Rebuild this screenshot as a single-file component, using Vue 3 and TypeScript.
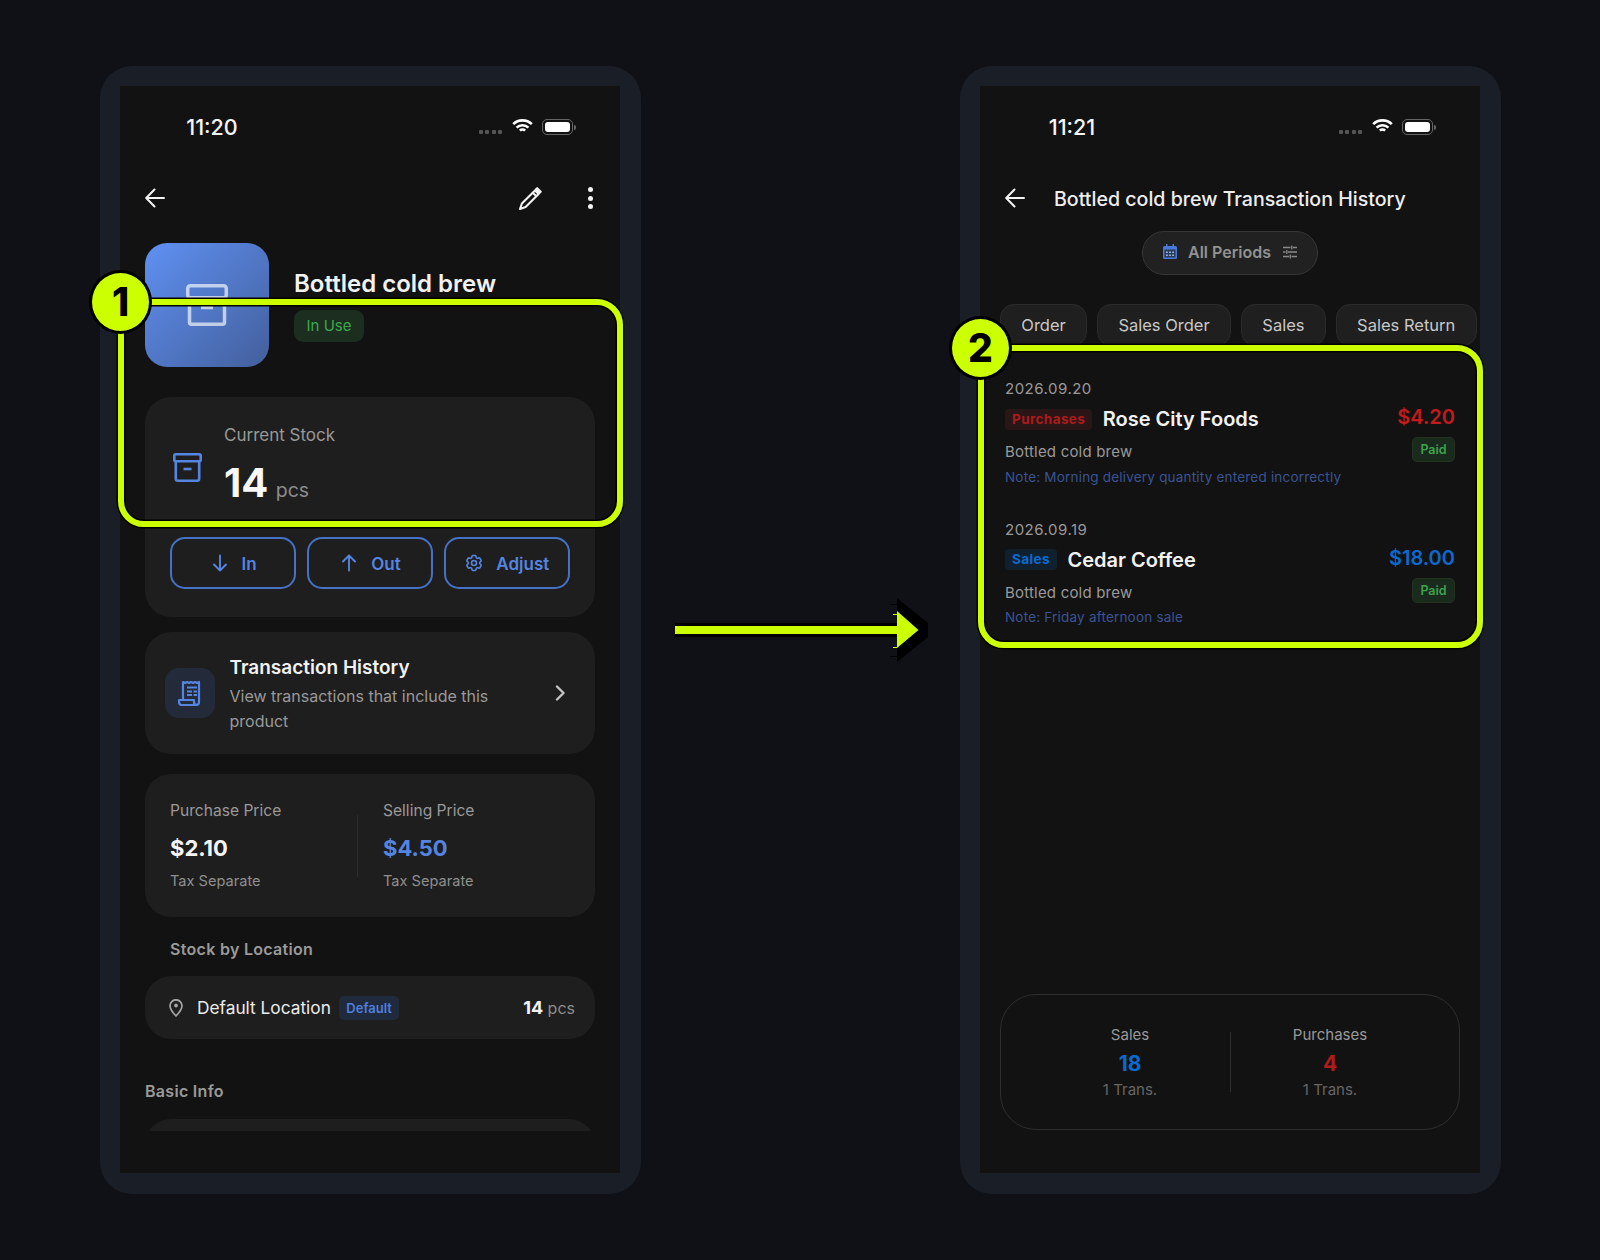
<script setup lang="ts">
interface Transaction {
  date: string
  kind: string
  tone: 'red' | 'blue'
  vendor: string
  amount: string
  item: string
  note: string
}

const tabs = ['Order', 'Sales Order', 'Sales', 'Sales Return']

const transactions: Transaction[] = [
  {
    date: '2026.09.20',
    kind: 'Purchases',
    tone: 'red',
    vendor: 'Rose City Foods',
    amount: '$4.20',
    item: 'Bottled cold brew',
    note: 'Note: Morning delivery quantity entered incorrectly'
  },
  {
    date: '2026.09.19',
    kind: 'Sales',
    tone: 'blue',
    vendor: 'Cedar Coffee',
    amount: '$18.00',
    item: 'Bottled cold brew',
    note: 'Note: Friday afternoon sale'
  }
]

const gearPath =
  'M9.594 3.94c.09-.542.56-.94 1.11-.94h2.593c.55 0 1.02.398 1.11.94l.213 1.281c.063.374.313.686.645.87.074.04.147.083.22.127.325.196.72.257 1.075.124l1.217-.456a1.125 1.125 0 0 1 1.37.49l1.296 2.247a1.125 1.125 0 0 1-.26 1.431l-1.003.827c-.293.241-.438.613-.43.992a7.723 7.723 0 0 1 0 .255c-.008.378.137.75.43.991l1.004.827c.424.35.534.955.26 1.43l-1.298 2.247a1.125 1.125 0 0 1-1.369.491l-1.217-.456c-.355-.133-.75-.072-1.076.124a6.47 6.47 0 0 1-.22.128c-.331.183-.581.495-.644.869l-.213 1.281c-.09.543-.56.94-1.11.94h-2.594c-.55 0-1.019-.398-1.11-.94l-.213-1.281c-.062-.374-.312-.686-.644-.87a6.52 6.52 0 0 1-.22-.127c-.325-.196-.72-.257-1.076-.124l-1.217.456a1.125 1.125 0 0 1-1.369-.49l-1.297-2.247a1.125 1.125 0 0 1 .26-1.431l1.004-.827c.292-.24.437-.613.43-.991a6.932 6.932 0 0 1 0-.255c.007-.38-.138-.751-.43-.992l-1.004-.827a1.125 1.125 0 0 1-.26-1.43l1.297-2.247a1.125 1.125 0 0 1 1.37-.491l1.216.456c.356.133.751.072 1.076-.124.072-.044.146-.086.22-.128.332-.183.582-.495.644-.869l.214-1.28Z'
</script>

<template>
  <div class="page">
    <!-- product detail -->
    <section class="phone">
      <div class="screen">
        <div class="status">
          <span class="time">11:20</span>
          <div class="status-icons">
            <span class="signal"><i></i><i></i><i></i><i></i></span>
            <svg class="wifi" viewBox="0 0 21 15" fill="none" stroke="#fff" stroke-width="2.600">
              <path d="M1.200 5.200a13.200 13.200 0 0 1 18.600 0" />
              <path d="M4.600 8.600a8.400 8.400 0 0 1 11.800 0" />
              <path d="M7.900 11.700a3.700 3.700 0 0 1 5.200 0" />
            </svg>
            <span class="battery"><i></i></span>
          </div>
        </div>

        <div class="nav">
          <svg class="back" viewBox="0 0 20 20" fill="none" stroke="#f2f2f2" stroke-width="2" stroke-linecap="round" stroke-linejoin="round">
            <path d="M19 10H1.500M9.500 1.500 1.200 10l8.300 8.500" />
          </svg>
          <svg class="pencil" viewBox="0 0 24 23" fill="none" stroke="#f2f2f2" stroke-width="2.100" stroke-linejoin="round">
            <path d="M17 3.500 20.600 7 7.600 20l-5.600 2 1.900-5.500Z" />
            <path d="M14.800 5.700l3.600 3.500" />
            <path d="M19.200 1.200l3.500 3.500-1.400 1.400-3.500-3.500Z" fill="#f2f2f2" />
          </svg>
          <span class="dots"><i></i><i></i><i></i></span>
        </div>

        <div class="scroll">
          <div class="product">
            <div class="thumb">
              <svg viewBox="0 0 42 42" fill="none" stroke="#fff" stroke-opacity=".65" stroke-width="3.500" stroke-linejoin="round">
                <rect x="1.750" y="1.750" width="38.500" height="12" rx="2.500" />
                <path d="M3.500 13.750v24.500a2 2 0 0 0 2 2h31a2 2 0 0 0 2-2v-24.500" />
                <path d="M15 23.500h12" />
              </svg>
            </div>
            <div class="product-info">
              <h1>Bottled cold brew</h1>
              <span class="use-badge">In Use</span>
            </div>
          </div>

          <div class="card stock">
            <div class="stock-row">
              <svg class="stock-icon" viewBox="0 0 29 29" fill="none" stroke="#5585e0" stroke-width="2.600" stroke-linejoin="round">
                <rect x="1.300" y="1.300" width="26.400" height="7" rx="1.500" />
                <path d="M2.800 8.300v17.400a2 2 0 0 0 2 2h19.400a2 2 0 0 0 2-2V8.300" />
                <path d="M10.500 16h8" />
              </svg>
              <div>
                <div class="stock-label">Current Stock</div>
                <div class="stock-value">14 <small>pcs</small></div>
              </div>
            </div>
            <div class="actions">
              <button>
                <svg viewBox="0 0 20 20" fill="none" stroke="currentColor" stroke-width="1.900" stroke-linecap="round" stroke-linejoin="round">
                  <path d="M10 2.500v15M4 11.500l6 6 6-6" />
                </svg>
                In
              </button>
              <button>
                <svg viewBox="0 0 20 20" fill="none" stroke="currentColor" stroke-width="1.900" stroke-linecap="round" stroke-linejoin="round">
                  <path d="M10 17.500v-15M4 8.500l6-6 6 6" />
                </svg>
                Out
              </button>
              <button>
                <svg viewBox="0 0 24 24" fill="none" stroke="currentColor" stroke-width="1.900" stroke-linejoin="round">
                  <path :d="gearPath" />
                  <circle cx="12" cy="12" r="3" />
                </svg>
                Adjust
              </button>
            </div>
          </div>

          <div class="card history">
            <div class="history-icon">
              <svg viewBox="0 0 24 26" fill="none" stroke="#5585e0" stroke-width="2.200" stroke-linejoin="round">
                <path d="M5 19V2l2 1 2-1 2 1 2-1 2 1 2-1 2 1 2-1v20a3 3 0 0 1-3 3H4a3 3 0 0 1-3-3v-2h15v2a3 3 0 0 0 3 3" />
                <path d="M9 7.500h10M9 11.500h5M15.500 11.500H19M9 15h5M15.500 15H19" stroke-width="1.800" />
              </svg>
            </div>
            <div class="history-text">
              <div class="history-title">Transaction History</div>
              <div class="history-desc">View transactions that include this product</div>
            </div>
            <svg class="chevron" viewBox="0 0 10 20" fill="none" stroke="#c4c4c4" stroke-width="2.400" stroke-linecap="round" stroke-linejoin="round">
              <path d="M2 3.500l6.500 6.500L2 16.500" />
            </svg>
          </div>

          <div class="card prices">
            <div class="price-col first">
              <div class="price-label">Purchase Price</div>
              <div class="price-value">$2.10</div>
              <div class="price-tax">Tax Separate</div>
            </div>
            <div class="price-divider"></div>
            <div class="price-col">
              <div class="price-label">Selling Price</div>
              <div class="price-value accent">$4.50</div>
              <div class="price-tax">Tax Separate</div>
            </div>
          </div>

          <h2 class="section-title indented">Stock by Location</h2>
          <div class="card location">
            <svg class="pin" viewBox="0 0 14 18" fill="none" stroke="#a5a5a5" stroke-width="1.700" stroke-linejoin="round">
              <path d="M7 17S1 10.800 1 6.800a6 6 0 0 1 12 0C13 10.800 7 17 7 17Z" />
              <circle cx="7" cy="6.500" r="1.900" fill="#a5a5a5" stroke="none" />
            </svg>
            <span class="location-name">Default Location</span>
            <span class="default-badge">Default</span>
            <span class="location-qty"><b>14</b> pcs</span>
          </div>

          <h2 class="section-title basic">Basic Info</h2>
          <div class="card basic-card"></div>
        </div>
      </div>

      <div class="mark-box one"></div>
      <div class="mark-num one">1</div>
    </section>

    <div class="arrow-gap">
      <svg width="253" height="64" viewBox="0 0 253 64">
        <path d="M0 25h222V0l31 25v14l-31 25V39H0Z" fill="#000" />
        <path d="M215 6h7v1h-7ZM215 58h7v1h-7Z" fill="#000" />
        <path d="M218 16h4v1h-4ZM218 49h4v1h-4Z" fill="#ccff00" />
        <path d="M0 28h222V13l21.500 19L222 50V36H0Z" fill="#ccff00" />
      </svg>
    </div>

    <!-- transaction history -->
    <section class="phone">
      <div class="screen">
        <div class="status">
          <span class="time">11:21</span>
          <div class="status-icons">
            <span class="signal"><i></i><i></i><i></i><i></i></span>
            <svg class="wifi" viewBox="0 0 21 15" fill="none" stroke="#fff" stroke-width="2.600">
              <path d="M1.200 5.200a13.200 13.200 0 0 1 18.600 0" />
              <path d="M4.600 8.600a8.400 8.400 0 0 1 11.800 0" />
              <path d="M7.900 11.700a3.700 3.700 0 0 1 5.200 0" />
            </svg>
            <span class="battery"><i></i></span>
          </div>
        </div>

        <div class="nav">
          <svg class="back" viewBox="0 0 20 20" fill="none" stroke="#f2f2f2" stroke-width="2" stroke-linecap="round" stroke-linejoin="round">
            <path d="M19 10H1.500M9.500 1.500 1.200 10l8.300 8.500" />
          </svg>
          <span class="nav-title">Bottled cold brew Transaction History</span>
        </div>

        <div class="period-wrap">
          <div class="period">
            <svg class="cal" viewBox="0 0 14 15">
              <path d="M3 0h1.500v2h5V0H11v2h1.500A1.500 1.500 0 0 1 14 3.500v10a1.500 1.500 0 0 1-1.500 1.500h-11A1.500 1.500 0 0 1 0 13.500v-10A1.500 1.500 0 0 1 1.500 2H3Z" fill="#4a7ad8" />
              <path d="M1.500 5.500h11v8h-11Z" fill="#2a3a5a" />
              <path d="M3 7.500h1.800v1.500H3ZM6.100 7.500h1.800v1.500H6.100ZM9.200 7.500H11v1.500H9.200ZM3 10.500h1.800V12H3ZM6.100 10.500h1.800V12H6.100ZM9.200 10.500H11V12H9.200Z" fill="#9fb8e8" />
            </svg>
            <span>All Periods</span>
            <svg class="sliders" viewBox="0 0 14 14" fill="none" stroke="#8a8a8a" stroke-width="1.300">
              <path d="M0 2.500h7.500M10 2.500h4M8.800 0.500v4M0 7h2.500M5 7h9M3.800 5v4M0 11.500h6M8.500 11.500H14M7.300 9.500v4" />
            </svg>
          </div>
        </div>

        <div class="tabs">
          <button v-for="tab in tabs" :key="tab" class="tab">{{ tab }}</button>
        </div>

        <div class="tx-list">
          <div v-for="tx in transactions" :key="tx.date" class="tx">
            <div class="tx-main">
              <div class="tx-date">{{ tx.date }}</div>
              <div class="tx-head">
                <span class="kind" :class="tx.tone">{{ tx.kind }}</span>
                <span class="vendor">{{ tx.vendor }}</span>
              </div>
              <div class="tx-item">{{ tx.item }}</div>
              <div class="tx-note">{{ tx.note }}</div>
            </div>
            <div class="tx-side">
              <div class="amount" :class="tx.tone">{{ tx.amount }}</div>
              <span class="paid">Paid</span>
            </div>
          </div>
        </div>

        <div class="summary">
          <div class="sum-col">
            <div class="sum-label">Sales</div>
            <div class="sum-value blue">18</div>
            <div class="sum-count">1 Trans.</div>
          </div>
          <div class="sum-divider"></div>
          <div class="sum-col">
            <div class="sum-label">Purchases</div>
            <div class="sum-value red">4</div>
            <div class="sum-count">1 Trans.</div>
          </div>
        </div>
      </div>

      <div class="mark-box two"></div>
      <div class="mark-num two">2</div>
    </section>
  </div>
</template>

<style>
html,
body {
  background: #0f1116;
}
</style>

<style scoped>
.page {
  display: flex;
  align-items: flex-start;
  width: 1600px;
  height: 1260px;
  box-sizing: border-box;
  padding: 66px 0 0 100px;
  background: #0f1116;
  font-family: Inter, "Liberation Sans", sans-serif;
  color: #f2f2f2;
  overflow: hidden;
}

.phone {
  position: relative;
  flex: none;
  width: 541px;
  height: 1128px;
  box-sizing: border-box;
  padding: 20px 21px 21px 20px;
  background: #1a1e27;
  border-radius: 32px;
}

.screen {
  display: flex;
  flex-direction: column;
  height: 100%;
  background: #121212;
  overflow: hidden;
}

.arrow-gap {
  flex: none;
  display: flex;
  width: 319px;
  height: 1128px;
  align-items: center;
  padding-left: 34px;
  box-sizing: border-box;
}

/* status bar */
.status {
  flex: none;
  display: flex;
  align-items: center;
  justify-content: space-between;
  height: 81px;
  margin-bottom: 1px;
  padding: 0 47px 0 66px;
}

.time {
  width: 52px;
  font-size: 21.500px;
  font-weight: 500;
  color: #f5f5f5;
  text-align: center;
  white-space: nowrap;
}

.status-icons {
  display: flex;
  align-items: center;
}

.signal {
  display: flex;
  gap: 2.500px;
  margin-top: 10px;
  margin-right: 10px;
}

.signal i {
  width: 4px;
  height: 4px;
  border-radius: 1px;
  background: #555;
}

.wifi {
  width: 21px;
  height: 15px;
  margin-right: 9px;
}

.battery {
  position: relative;
  box-sizing: border-box;
  display: block;
  width: 31px;
  height: 16px;
  padding: 2px;
  border: 1px solid #666;
  border-radius: 5px;
}

.battery::after {
  content: "";
  position: absolute;
  right: -3.500px;
  top: 5px;
  width: 2px;
  height: 5px;
  border-radius: 0 2px 2px 0;
  background: #666;
}

.battery i {
  display: block;
  height: 100%;
  border-radius: 3px;
  background: #fff;
}

/* nav */
.nav {
  flex: none;
  display: flex;
  align-items: center;
  height: 60px;
  padding: 0 25px;
}

.back {
  width: 20px;
  height: 20px;
}

.pencil {
  width: 24px;
  height: 23px;
  margin-left: auto;
  margin-right: 46px;
}

.dots {
  display: flex;
  flex-direction: column;
  gap: 3.500px;
  margin-right: 2px;
}

.dots i {
  width: 5px;
  height: 5px;
  border-radius: 50%;
  background: #f2f2f2;
}

.nav-title {
  margin-left: 29px;
  font-size: 19.600px;
  font-weight: 500;
  color: #eee;
  margin-top: 1px;
}

/* left phone content */
.scroll {
  height: 903px;
  padding: 15px 25px 0;
  box-sizing: border-box;
  overflow: hidden;
}

.product {
  display: flex;
  gap: 25px;
}

.thumb {
  display: flex;
  align-items: center;
  justify-content: center;
  width: 124px;
  height: 124px;
  border-radius: 22px;
  background: linear-gradient(135deg, #5f90f2, #435f9c);
}

.thumb svg {
  width: 42px;
  height: 42px;
}

.product-info {
  padding-top: 26px;
}

.product-info h1 {
  margin: 0;
  font-size: 24px;
  line-height: 30px;
  font-weight: 600;
  color: #f2f2f2;
}

.use-badge {
  display: block;
  width: 70px;
  height: 32px;
  margin-top: 11px;
  border-radius: 9px;
  background: #1c2e20;
  color: #3fa84e;
  font-size: 15px;
  line-height: 32px;
  text-align: center;
}

.card {
  background: #1e1e1e;
  border-radius: 26px;
}

.stock {
  margin-top: 30px;
  padding: 26px 25px 28px;
}

.stock-row {
  display: flex;
  align-items: center;
  gap: 22px;
  padding-left: 3px;
}

.stock-icon {
  width: 29px;
  height: 29px;
  margin-top: 6px;
}

.stock-label {
  font-size: 17px;
  line-height: 24px;
  color: #999;
}

.stock-value {
  margin-top: 13px;
  font-size: 40px;
  line-height: 46px;
  font-weight: 700;
  color: #f8f8f8;
}

.stock-value small {
  margin-left: -2px;
  font-size: 19.500px;
  line-height: 1;
  font-weight: 400;
  color: #8c8c8c;
}

.actions {
  display: flex;
  gap: 10.500px;
  margin-top: 31px;
}

.actions button {
  flex: 1;
  display: flex;
  align-items: center;
  justify-content: center;
  gap: 12px;
  height: 52px;
  padding: 2px 0 0;
  background: none;
  border: 2px solid #4672c6;
  border-radius: 15px;
  color: #5585e0;
  font: 600 17px Inter, "Liberation Sans", sans-serif;
}

.actions svg {
  width: 20px;
  height: 20px;
  margin-top: -2px;
}

.history {
  display: flex;
  align-items: center;
  margin-top: 15px;
  padding: 23px 20px 20px;
}

.history-icon {
  flex: none;
  display: flex;
  align-items: center;
  justify-content: center;
  width: 50px;
  height: 50px;
  margin-top: -3px;
  margin-right: 14.500px;
  border-radius: 14px;
  background: #232b3b;
}

.history-icon svg {
  width: 24px;
  height: 26px;
}

.history-text {
  flex: 1;
}

.history-title {
  font-size: 19px;
  line-height: 26px;
  font-weight: 600;
  color: #f2f2f2;
}

.history-desc {
  width: 290px;
  margin-top: 3px;
  font-size: 16px;
  line-height: 25px;
  color: #999;
}

.chevron {
  flex: none;
  width: 10px;
  height: 20px;
  margin-top: -4px;
  margin-right: 10px;
}

.prices {
  display: flex;
  align-items: center;
  margin-top: 20px;
  padding: 26px 25px;
}

.price-col.first {
  width: 187px;
}

.price-label {
  font-size: 15.600px;
  line-height: 22px;
  color: #999;
}

.price-value {
  margin-top: 11px;
  font-size: 22px;
  line-height: 30px;
  font-weight: 700;
  color: #f5f5f5;
}

.price-value.accent {
  color: #5585e0;
}

.price-tax {
  margin-top: 8px;
  font-size: 14.600px;
  line-height: 20px;
  color: #8f8f8f;
}

.price-divider {
  width: 1px;
  height: 62px;
  margin-right: 25px;
  background: #2c2c2c;
}

.section-title {
  margin: 20.500px 0 0;
  font-size: 16px;
  line-height: 22px;
  font-weight: 600;
  letter-spacing: .3px;
  color: #9a9a9a;
}

.section-title.indented {
  margin-left: 25px;
}

.section-title.basic {
  margin-top: 41px;
}

.location {
  display: flex;
  align-items: center;
  height: 63px;
  margin-top: 16.500px;
  padding: 0 20px 0 24px;
}

.pin {
  width: 14px;
  height: 18px;
}

.location-name {
  margin-left: 14px;
  font-size: 17.300px;
  color: #ececec;
}

.default-badge {
  margin-left: 8px;
  padding: 0 7.500px;
  height: 24px;
  border-radius: 5px;
  background: #202a3d;
  color: #4f7fdf;
  font-size: 13px;
  line-height: 24px;
  font-weight: 600;
}

.location-qty {
  margin-left: auto;
  font-size: 16px;
  color: #8c8c8c;
}

.location-qty b {
  font-size: 18px;
  font-weight: 700;
  color: #f2f2f2;
}

.basic-card {
  height: 100px;
  margin-top: 17px;
}

/* right phone content */
.period-wrap {
  flex: none;
  display: flex;
  justify-content: center;
  margin-top: 2.500px;
}

.period {
  display: flex;
  align-items: center;
  box-sizing: border-box;
  width: 176px;
  height: 44px;
  padding: 0 0 2px 20px;
  background: #212121;
  border: 1px solid #363636;
  border-radius: 22px;
  color: #929292;
  font-size: 16px;
  font-weight: 600;
  white-space: nowrap;
}

.cal {
  flex: none;
  width: 14px;
  height: 15px;
  margin-right: 11px;
}

.sliders {
  flex: none;
  width: 14px;
  height: 14px;
  margin-left: 12px;
}

.tabs {
  flex: none;
  display: flex;
  gap: 10px;
  margin-top: 29.500px;
  padding-left: 20px;
}

.tab {
  height: 42px;
  padding: 0 20.300px;
  background: #1f1f1f;
  border: 1px solid #2b2b2b;
  border-radius: 14px;
  color: #c8c8c8;
  font: 400 16.500px Inter, "Liberation Sans", sans-serif;
  white-space: nowrap;
}

.tx-list {
  flex: none;
  padding: 33px 25px 0;
}

.tx {
  display: flex;
  justify-content: space-between;
  height: 108px;
  margin-bottom: 32.500px;
}

.tx-date {
  font-size: 15px;
  line-height: 20px;
  letter-spacing: .5px;
  color: #9a9a9a;
}

.tx-head {
  display: flex;
  align-items: center;
  gap: 10.500px;
  height: 22px;
  margin-top: 9px;
}

.kind {
  height: 21px;
  padding: 0 7px;
  border-radius: 4px;
  font-size: 13.500px;
  line-height: 21px;
  font-weight: 700;
  letter-spacing: .4px;
}

.kind.red {
  background: #2a1616;
  color: #a81c1c;
}

.kind.blue {
  background: #10202e;
  color: #0a6ad0;
}

.vendor {
  font-size: 20px;
  font-weight: 600;
  color: #f2f2f2;
}

.tx-item {
  margin-top: 12px;
  font-size: 15px;
  line-height: 20px;
  letter-spacing: .2px;
  color: #9a9a9a;
}

.tx-note {
  margin-top: 4.500px;
  font-size: 13.500px;
  line-height: 20px;
  letter-spacing: .2px;
  color: #3a5492;
}

.tx-side {
  display: flex;
  flex-direction: column;
  align-items: flex-end;
  padding-top: 25px;
}

.amount {
  font-size: 20px;
  line-height: 26px;
  font-weight: 600;
}

.amount.red {
  color: #c21b1b;
}

.amount.blue {
  color: #0a6ad0;
}

.paid {
  display: block;
  box-sizing: border-box;
  width: 43px;
  height: 25px;
  margin-top: 7px;
  background: #1a2a1c;
  border: 1px solid #22331f;
  border-radius: 5px;
  color: #3fa34d;
  font-size: 12.500px;
  line-height: 23px;
  font-weight: 600;
  text-align: center;
}

.summary {
  flex: none;
  display: flex;
  align-items: center;
  justify-content: center;
  box-sizing: border-box;
  height: 136px;
  margin: auto 20px 43px;
  border: 1px solid #2e2e2e;
  border-radius: 36px;
}

.sum-col {
  width: 199px;
  text-align: center;
}

.sum-label {
  font-size: 15px;
  line-height: 20px;
  color: #999;
}

.sum-value {
  margin-top: 5px;
  font-size: 21px;
  line-height: 28px;
  font-weight: 700;
}

.sum-value.blue {
  color: #0a6ad0;
}

.sum-value.red {
  color: #b01c1c;
}

.sum-count {
  margin-top: 2px;
  font-size: 15px;
  line-height: 20px;
  color: #666;
}

.sum-divider {
  width: 1px;
  height: 60px;
  background: #2e2e2e;
}

/* callouts over the screens */
.mark-box {
  position: absolute;
  box-sizing: border-box;
  width: 505px;
  border: 6px solid #ccff00;
  border-radius: 26px;
  box-shadow: 0 0 0 1.500px #000, inset 0 0 0 1.500px #000;
}

.mark-box.one {
  left: 18px;
  top: 233px;
  height: 228px;
}

.mark-box.two {
  left: 18px;
  top: 279px;
  height: 303px;
}

.mark-num {
  position: absolute;
  left: -11px;
  box-sizing: border-box;
  width: 63px;
  height: 64px;
  border: 3.500px solid #000;
  border-radius: 50%;
  background: #ccff00;
  color: #000;
  font-size: 39px;
  line-height: 57px;
  font-weight: 800;
  text-align: center;
}

.mark-num.one {
  top: 204px;
}

.mark-num.two {
  top: 250px;
}
</style>
